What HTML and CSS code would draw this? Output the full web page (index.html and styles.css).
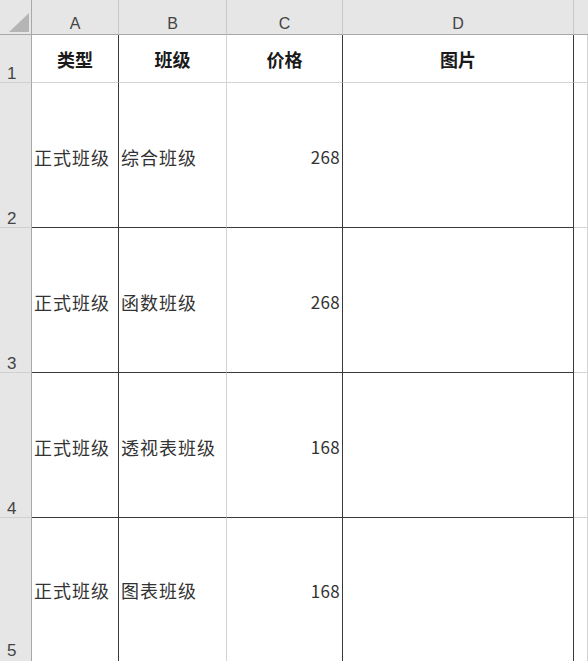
FILE: index.html
```html
<!DOCTYPE html>
<html lang="zh">
<head>
<meta charset="utf-8">
<link rel="stylesheet" href="styles.css">
</head>
<body>
<div class="sheet">
  <div class="corner"><svg class="tri" width="20" height="19" viewBox="0 0 20 19"><polygon points="20,0 20,19 0,19" fill="#b5b5b5"/></svg></div>
  <div class="colhead">A</div>
  <div class="colhead">B</div>
  <div class="colhead">C</div>
  <div class="colhead">D</div>
  <div class="colhead last"></div>

  <div class="rowhead">1</div>
  <div class="cell th dr">类型</div>
  <div class="cell th">班级</div>
  <div class="cell th dr">价格</div>
  <div class="cell th dr">图片</div>
  <div class="cell"></div>

  <div class="rowhead">2</div>
  <div class="cell dr db">正式班级</div>
  <div class="cell db">综合班级</div>
  <div class="cell num dr db">268</div>
  <div class="cell dr db"></div>
  <div class="cell"></div>

  <div class="rowhead">3</div>
  <div class="cell dr db">正式班级</div>
  <div class="cell db">函数班级</div>
  <div class="cell num dr db">268</div>
  <div class="cell dr db"></div>
  <div class="cell"></div>

  <div class="rowhead">4</div>
  <div class="cell dr db">正式班级</div>
  <div class="cell db">透视表班级</div>
  <div class="cell num dr db">168</div>
  <div class="cell dr db"></div>
  <div class="cell"></div>

  <div class="rowhead last">5</div>
  <div class="cell dr last">正式班级</div>
  <div class="cell last">图表班级</div>
  <div class="cell num dr last">168</div>
  <div class="cell dr last"></div>
  <div class="cell last"></div>
</div>
</body>
</html>
```

FILE: styles.css
```css
html, body {
  margin: 0;
  padding: 0;
  background: #ffffff;
  overflow: hidden;
}

.sheet {
  display: grid;
  grid-template-columns: 32px 87px 108px 116px 231px 1fr;
  grid-template-rows: 35px 48px 145px 145px 145px 143px;
  width: 588px;
  height: 661px;
  overflow: hidden;
  font-family: "Noto Sans CJK SC", "Noto Sans", sans-serif;
}

.sheet > div {
  box-sizing: border-box;
  min-width: 0;
}

.corner {
  background: #e6e6e6;
  border-right: 1px solid #a8a8a8;
  border-bottom: 1px solid #a8a8a8;
  display: flex;
  align-items: flex-end;
  justify-content: flex-end;
  padding: 0 2px 2px 0;
}

.tri {
  display: block;
  flex: none;
}

.colhead {
  background: #e6e6e6;
  border-right: 1px solid #c8c8c8;
  border-bottom: 1px solid #a8a8a8;
  color: #444444;
  font-family: "Liberation Sans", "Noto Sans", sans-serif;
  font-size: 16px;
  display: flex;
  align-items: flex-end;
  justify-content: center;
  padding-bottom: 1px;
  line-height: 18px;
}

.colhead.last {
  border-right: none;
}

.rowhead {
  background: #e6e6e6;
  border-right: 1px solid #a8a8a8;
  border-bottom: 1px solid #d0d0d0;
  color: #444444;
  font-family: "Liberation Sans", "Noto Sans", sans-serif;
  font-size: 17px;
  display: flex;
  align-items: flex-end;
  padding: 0 0 0 7px;
  line-height: 17px;
}

.rowhead.last {
  border-bottom: none;
  padding-bottom: 2px;
}

.cell {
  border-right: 1px solid #d4d4d4;
  border-bottom: 1px solid #d4d4d4;
  color: #333333;
  font-size: 18px;
  letter-spacing: 1px;
  display: flex;
  align-items: center;
  padding: 3px 0 0 2px;
  white-space: nowrap;
  overflow: hidden;
}

.cell.last {
  border-bottom: none;
  padding-bottom: 2px;
}

.cell.th {
  justify-content: center;
  font-weight: bold;
  color: #1a1a1a;
  letter-spacing: 0;
  padding: 0;
}

.cell.num {
  justify-content: flex-end;
  padding-right: 2px;
  font-size: 17px;
  letter-spacing: 0.3px;
}

.cell.dr {
  border-right-color: #3a3a3a;
}

.cell.db {
  border-bottom-color: #3a3a3a;
}
```
